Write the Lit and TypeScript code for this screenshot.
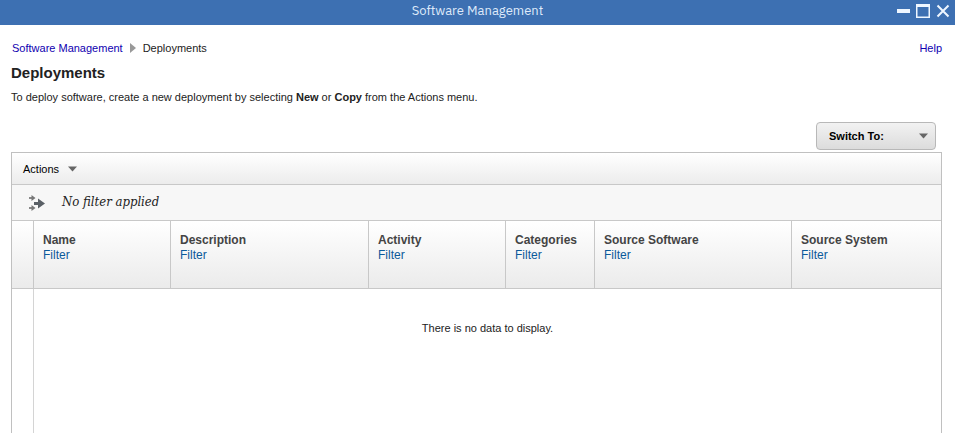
import { LitElement, html, css, svg } from "lit";
import { customElement, property } from "lit/decorators.js";

const columns = [
  { key: "name", label: "Name" },
  { key: "description", label: "Description" },
  { key: "activity", label: "Activity" },
  { key: "categories", label: "Categories" },
  { key: "software", label: "Source Software" },
  { key: "system", label: "Source System" },
];

const caretDown = html`<svg class="caret" width="9" height="6" viewBox="0 0 9 6" aria-hidden="true">
  <path d="M0 0.5H9L4.5 5.5Z" fill="#666" />
</svg>`;

@customElement("title-bar")
class TitleBar extends LitElement {
  @property() heading = "";

  static styles = css`
    :host {
      display: grid;
      grid-template-columns: 1fr auto 1fr;
      height: 25px;
      background: #3d70b2;
      color: #dfeafa;
      font-family: "IBM Plex Sans", Roboto, sans-serif;
    }
    .title {
      grid-column: 2;
      margin: 0;
      font-size: 13px;
      font-weight: 400;
      line-height: 22px;
    }
    .controls {
      display: flex;
      justify-content: flex-end;
      align-items: flex-start;
      gap: 4px;
      padding: 3px 4px 0 0;
    }
    button {
      display: block;
      width: 16px;
      height: 16px;
      padding: 0;
      border: 0;
      background: none;
    }
    svg {
      display: block;
    }
  `;

  private control(label: string, shape: unknown) {
    return html`<button type="button" aria-label=${label}>
      <svg width="16" height="16" viewBox="0 0 16 16">${shape}</svg>
    </button>`;
  }

  render() {
    return html`
      <h1 class="title">${this.heading}</h1>
      <div class="controls">
        ${this.control("Minimize", svg`<path d="M2 6h13v4H2z" fill="#eef6ff" />`)}
        ${this.control("Maximize", svg`<path d="M1 1h14v14H1zM2.500 4v9.500h11V4z" fill="#eef6ff" fill-rule="evenodd" />`)}
        ${this.control("Close", svg`<path d="M2.500 2.500L13.500 13.500M13.500 2.500L2.500 13.500" stroke="#eef6ff" stroke-width="2" />`)}
      </div>
    `;
  }
}

@customElement("data-grid")
class DataGrid extends LitElement {
  static styles = css`
    :host {
      display: flex;
      flex-direction: column;
      border: 1px solid #c0c0c0;
      border-bottom: 0;
    }
    button {
      font: inherit;
      border: 0;
      background: none;
    }
    .toolbar {
      display: flex;
      align-items: center;
      height: 31px;
      padding-left: 11px;
      border-bottom: 1px solid #c8c8c8;
      background: linear-gradient(#fff, #ececec);
    }
    .menu {
      display: flex;
      align-items: center;
      gap: 9px;
      padding: 0;
      color: #000;
      font-size: 11px;
      line-height: 16px;
    }
    .filterbar {
      display: flex;
      align-items: center;
      gap: 16px;
      height: 35px;
      padding-left: 17px;
      border-bottom: 1px solid #c8c8c8;
      background: #f7f7f7;
    }
    .status {
      padding-bottom: 2px;
      color: #222;
      font: italic 13px/20px "DejaVu Serif Condensed", "DejaVu Serif", serif;
    }
    table {
      flex: 1;
      width: 100%;
      table-layout: fixed;
      border-collapse: separate;
      border-spacing: 0;
    }
    .select { width: 22px; }
    .name, .activity { width: 137px; }
    .description { width: 198px; }
    .categories { width: 89px; }
    .software { width: 197px; }
    th {
      box-sizing: border-box;
      height: 68px;
      padding: 12px 0 0 9px;
      border-right: 1px solid #c8c8c8;
      border-bottom: 1px solid #c8c8c8;
      background: linear-gradient(#fff, #ebebeb);
      color: #444;
      font-size: 12px;
      line-height: 15px;
      text-align: left;
      vertical-align: top;
      white-space: nowrap;
    }
    th:last-child { border-right: 0; }
    th a {
      display: block;
      color: #0b5a9a;
      font-weight: 400;
      text-decoration: none;
    }
    td { padding: 0; }
    td:first-child { border-right: 1px solid #d4d4d4; }
    .empty {
      padding-top: 32px;
      color: #222;
      font-size: 11px;
      line-height: 14px;
      text-align: center;
      vertical-align: top;
    }
  `;

  render() {
    return html`
      <div class="toolbar">
        <button class="menu" type="button" aria-haspopup="menu">Actions ${caretDown}</button>
      </div>
      <div class="filterbar">
        <svg width="17" height="16" viewBox="0 0 17 16" aria-hidden="true">
          <path d="M0 3h4M0 13h4" stroke="#888" stroke-width="2" />
          <path d="M2.500 0L6.500 3l-4 3zM2.500 10l4 3-4 3z" fill="#777" />
          <path d="M5 7h4V3.500L16 8.500 9 13.500V10H5z" fill="#5a6066" />
        </svg>
        <span class="status">No filter applied</span>
      </div>
      <table>
        <colgroup>
          <col class="select" />
          ${columns.map((c) => html`<col class=${c.key} />`)}
        </colgroup>
        <thead>
          <tr>
            <th scope="col" aria-label="Selection"></th>
            ${columns.map((c) => html`<th scope="col">${c.label}<a href="#">Filter</a></th>`)}
          </tr>
        </thead>
        <tbody>
          <tr>
            <td></td>
            <td class="empty" colspan=${columns.length}>There is no data to display.</td>
          </tr>
        </tbody>
      </table>
    `;
  }
}

@customElement("app-root")
class AppRoot extends LitElement {
  static styles = css`
    :host {
      display: flex;
      flex-direction: column;
      min-height: 100vh;
      background: #fff;
      color: #222;
      font: 11px/14px "Liberation Sans", Arial, sans-serif;
    }
    main {
      flex: 1;
      display: flex;
      flex-direction: column;
      padding: 16px 13px 0 11px;
    }
    .top {
      display: flex;
      justify-content: space-between;
      padding-left: 1px;
    }
    a {
      color: #1000b0;
      text-decoration: none;
    }
    .crumbs {
      display: flex;
      align-items: center;
      gap: 7px;
    }
    h2 {
      margin: 9px 0 8px;
      color: #222;
      font-size: 15px;
      line-height: 18px;
    }
    p { margin: 0; }
    .switch {
      position: relative;
      align-self: flex-end;
      width: 120px;
      margin: 18px 6px 2px 0;
    }
    select {
      appearance: none;
      display: block;
      box-sizing: border-box;
      width: 100%;
      height: 28px;
      padding: 0 12px;
      border: 1px solid #b8b8b8;
      border-radius: 4px;
      background: linear-gradient(#f2f2f2, #dcdcdc);
      color: #000;
      font: bold 11px "Liberation Sans", Arial, sans-serif;
    }
    .caret {
      position: absolute;
      top: 11px;
      right: 8px;
      pointer-events: none;
    }
    data-grid { flex: 1; }
  `;

  render() {
    return html`
      <title-bar heading="Software Management"></title-bar>
      <main>
        <div class="top">
          <nav class="crumbs" aria-label="Breadcrumb">
            <a href="#">Software Management</a>
            <svg width="6" height="10" viewBox="0 0 6 10" aria-hidden="true">
              <path d="M0 0L6 5 0 10z" fill="#999" />
            </svg>
            <span>Deployments</span>
          </nav>
          <a href="#">Help</a>
        </div>
        <h2>Deployments</h2>
        <p>To deploy software, create a new deployment by selecting <b>New</b> or <b>Copy</b> from the Actions menu.</p>
        <div class="switch">
          <select aria-label="Switch To">
            <option>Switch To:</option>
          </select>
          ${caretDown}
        </div>
        <data-grid></data-grid>
      </main>
    `;
  }
}
